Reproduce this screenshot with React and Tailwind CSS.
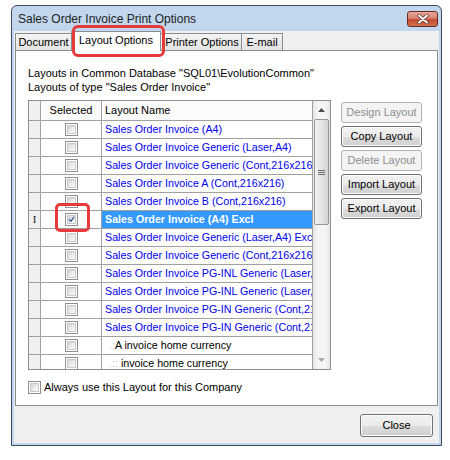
import React from "react";

const font = { fontFamily: '"Liberation Sans", Arial, sans-serif' };

function CheckBox({ checked }) {
  return (
    <div className="w-[13px] h-[13px] border border-[#8f8f8f] bg-white p-[1px] shrink-0">
      <div className="w-full h-full border border-[#c9c9c9] bg-[linear-gradient(135deg,#d4d4d4_0%,#eeeeee_60%,#fbfbfb_100%)] relative">
        {checked && (
          <svg viewBox="0 0 9 9" className="absolute inset-0 w-full h-full">
            <path d="M1.6 4.6 L3.6 6.8 L7.6 1.4" fill="none" stroke="#3e5a95" strokeWidth="1.7" strokeLinecap="round" strokeLinejoin="round" />
          </svg>
        )}
      </div>
    </div>
  );
}

function Btn({ children, disabled, w = "w-[81px]", h = "h-[21px]" }) {
  return disabled ? (
    <div className={`${w} ${h} rounded-[3px] border border-[#adb2b5] bg-[#f4f4f4] flex items-center justify-center text-[11px] text-[#8d8d8d]`}>
      {children}
    </div>
  ) : (
    <div className={`${w} ${h} rounded-[3px] border border-[#707070] bg-[linear-gradient(#f2f2f2_0%,#ebebeb_50%,#dddddd_50%,#cfcfcf_100%)] flex items-center justify-center text-[11px] text-black shadow-[inset_0_0_0_1px_#fcfcfc]`}>
      {children}
    </div>
  );
}

const rows = [
  "Sales Order Invoice (A4)",
  "Sales Order Invoice Generic (Laser,A4)",
  "Sales Order Invoice Generic (Cont,216x216)",
  "Sales Order Invoice A (Cont,216x216)",
  "Sales Order Invoice B (Cont,216x216)",
  "Sales Order Invoice (A4) Excl",
  "Sales Order Invoice Generic (Laser,A4) Excl",
  "Sales Order Invoice Generic (Cont,216x216)",
  "Sales Order Invoice PG-INL Generic (Laser,A4)",
  "Sales Order Invoice PG-INL Generic (Laser,A4)",
  "Sales Order Invoice PG-IN Generic (Cont,216x216)",
  "Sales Order Invoice PG-IN Generic (Cont,216x216)",
  "ZA invoice home currency",
  "ZAC invoice home currency",
];

export default function App() {
  return (
    <div className="w-[450px] h-[460px] bg-white pt-[5px] pl-[11px] relative overflow-hidden" style={font}>
      <div className="w-[431px] h-[441px] border border-[#3b4a5c] rounded-t-[6px] bg-[#c2d6ee] flex flex-col">
        {/* title bar */}
        <div className="h-[25px] flex items-start justify-between pl-[6px] pr-[3px] shrink-0">
          <div className="text-[12px] text-[#1e1e1e] pt-[6px] leading-[14px]">Sales Order Invoice Print Options</div>
          <div className="mt-[5px] w-[31px] h-[16px] rounded-[3px] border border-[#6b2b22] bg-[linear-gradient(#e8a79b_0%,#d98372_45%,#c24a30_55%,#d0714f_100%)] flex items-center justify-center">
            <svg viewBox="0 0 12 10" className="w-[12px] h-[10px]">
              <path d="M2 1.5 L10 8.5 M10 1.5 L2 8.5" stroke="#5a2a24" strokeWidth="3.4" strokeLinecap="round" />
              <path d="M2 1.5 L10 8.5 M10 1.5 L2 8.5" stroke="#ffffff" strokeWidth="2" strokeLinecap="round" />
            </svg>
          </div>
        </div>
        {/* body */}
        <div className="flex-1 mx-[2px] mb-[2px] bg-[#f0f0f0] flex flex-col">
          {/* tabs */}
          <div className="flex items-end h-[19px] pl-[1px] shrink-0 relative z-10">
            <div className="w-[57px] h-[17px] border border-[#898c95] border-b-0 bg-[linear-gradient(#f4f4f4,#e3e3e3)] text-[11px] flex items-center justify-center">Document</div>
            <div className="w-[90px] h-[20px] -mb-[1px] -mx-[1px] border border-[#898c95] border-b-0 bg-white text-[11px] flex items-center justify-center relative z-10 pb-[2px]">Layout Options</div>
            <div className="w-[82px] h-[17px] border border-[#898c95] border-b-0 bg-[linear-gradient(#f4f4f4,#e3e3e3)] text-[11px] flex items-center justify-center pl-[2px]">Printer Options</div>
            <div className="w-[41px] h-[17px] border border-[#898c95] border-b-0 border-l-0 bg-[linear-gradient(#f4f4f4,#e3e3e3)] text-[11px] flex items-center justify-center">E-mail</div>
          </div>
          {/* panel */}
          <div className="ml-[1px] w-[423px] h-[356px] border border-[#898c95] bg-white pl-[12px] pt-[15px] flex flex-col shrink-0">
            <div className="text-[11px] leading-[14px] text-black">Layouts in Common Database "SQL01\EvolutionCommon"</div>
            <div className="text-[11px] leading-[14px] text-black">Layouts of type "Sales Order Invoice"</div>
            <div className="flex mt-[6px] gap-[10px]">
              {/* grid */}
              <div className="w-[303px] h-[270px] border border-[#8e8f8f] flex bg-white">
                <div className="flex-1 flex flex-col overflow-hidden">
                  <div className="h-[20px] flex border-b border-[#a0a0a0] shrink-0 bg-[#fbfbfb]">
                    <div className="w-[12px] border-r border-[#a0a0a0] bg-[#f0f0f0]" />
                    <div className="w-[61px] border-r border-[#a0a0a0] flex items-center justify-center text-[11px]">Selected</div>
                    <div className="flex-1 flex items-center pl-[3px] text-[11px] border-r border-[#a0a0a0]">Layout Name</div>
                  </div>
                  {rows.map((r, i) => {
                    const sel = i === 5;
                    const home = i >= 12;
                    return (
                      <div key={i} className="h-[18px] flex border-b border-[#a0a0a0] shrink-0">
                        <div className="w-[12px] border-r border-[#a0a0a0] bg-[#f0f0f0] flex items-center justify-center text-[11px] text-[#222]" style={{ fontFamily: '"Liberation Serif", serif' }}>
                          {sel ? "I" : ""}
                        </div>
                        <div className="w-[61px] border-r border-[#a0a0a0] flex items-center justify-center">
                          <CheckBox checked={sel} />
                        </div>
                        <div className={`w-[211px] border-r border-[#a0a0a0] flex items-center pl-[3px] text-[10.7px] whitespace-nowrap overflow-hidden ${sel ? "bg-[#3399ff] text-white font-bold" : home ? "text-black" : "text-[#0000ee]"}`}>
                          {home ? (
                            <span><span className="text-[#c8c8c8] pl-[4px]">{i === 12 ? ".:" : ".::"}</span>{i === 12 ? "A invoice home currency" : " invoice home currency"}</span>
                          ) : (
                            r
                          )}
                        </div>
                      </div>
                    );
                  })}
                </div>
                {/* scrollbar */}
                <div className="w-[17px] bg-[linear-gradient(90deg,#e6e6e6,#f5f5f5_30%,#f5f5f5_70%,#e6e6e6)] flex flex-col shrink-0">
                  <div className="h-[18px] flex items-center justify-center shrink-0">
                    <svg viewBox="0 0 7 4" className="w-[7px] h-[4px]"><path d="M0 4 L3.5 0 L7 4 Z" fill="#4d4d4d" /></svg>
                  </div>
                  <div className="mx-[1px] h-[106px] rounded-[2px] border border-[#979797] bg-[linear-gradient(90deg,#f2f2f2,#e4e4e4_50%,#d4d4d4)] flex flex-col items-center justify-center gap-[1px] shrink-0">
                    <div className="w-[7px] h-[1px] bg-[#6b6b6b]" />
                    <div className="w-[7px] h-[1px] bg-[#6b6b6b]" />
                    <div className="w-[7px] h-[1px] bg-[#6b6b6b]" />
                  </div>
                  <div className="flex-1" />
                  <div className="h-[18px] flex items-center justify-center shrink-0">
                    <svg viewBox="0 0 7 4" className="w-[7px] h-[4px]"><path d="M0 0 L3.5 4 L7 0 Z" fill="#a8a8a8" /></svg>
                  </div>
                </div>
              </div>
              {/* buttons */}
              <div className="flex flex-col gap-[3px] pt-[2px]">
                <Btn disabled>Design Layout</Btn>
                <Btn>Copy Layout</Btn>
                <Btn disabled>Delete Layout</Btn>
                <Btn>Import Layout</Btn>
                <Btn>Export Layout</Btn>
              </div>
            </div>
            <div className="flex items-center gap-[3px] mt-[9px]">
              <CheckBox />
              <span className="text-[11px]">Always use this Layout for this Company</span>
            </div>
          </div>
          <div className="flex justify-end pr-[6px] pt-[8px]">
            <Btn w="w-[73px]" h="h-[23px]">Close</Btn>
          </div>
        </div>
      </div>

      {/* red annotation boxes */}
      <div className="absolute left-[72px] top-[25px] w-[93px] h-[32px] border-[3px] border-[#e53b3b] rounded-[6px] z-20" />
      <div className="absolute left-[55px] top-[203px] w-[35px] h-[29px] border-[3px] border-[#e53b3b] rounded-[5px] z-20" />
    </div>
  );
}
